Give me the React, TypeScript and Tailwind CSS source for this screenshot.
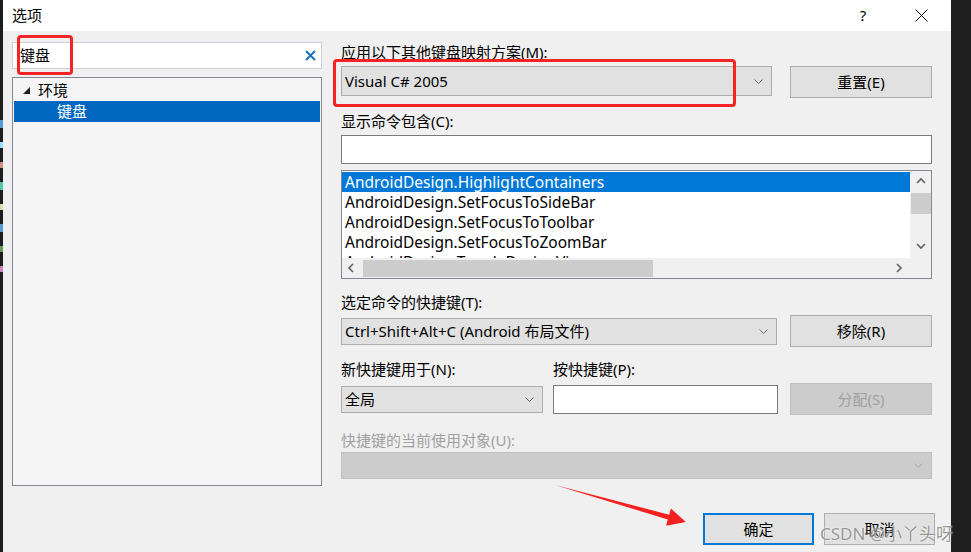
const font = "font-['Noto_Sans','Noto_Sans_CJK_SC',sans-serif]"

const Chevron = ({ color = "#606060" }: { color?: string }) => (
    <svg width="9" height="5" viewBox="0 0 9 5">
        <polyline points="0.5,0.5 4.5,4.5 8.5,0.5" fill="none" stroke={color} strokeWidth="0.9" />
    </svg>
)

const ScrollArrow = ({ dir }: { dir: "up" | "down" | "left" | "right" }) => {
    const pts = {
        up: "1,6 5,2 9,6",
        down: "1,2 5,6 9,2",
        left: "6,1 2,5 6,9",
        right: "3,1 7,5 3,9",
    }[dir]
    return (
        <svg width="10" height="10" viewBox="0 0 10 10">
            <polyline points={pts} fill="none" stroke="#606060" strokeWidth="1.6" />
        </svg>
    )
}

const Combo = ({ text, className, disabled }: { text: string; className: string; disabled?: boolean }) => (
    <div
        className={
            disabled
                ? `${className} h-[27px] flex items-center justify-between bg-[#cccccc] border border-[#bfbfbf] pl-[3px] pr-[8px]`
                : `${className} flex items-center justify-between bg-[#e1e1e1] border border-[#adadad] pl-[3px] pr-[8px]`
        }
    >
        <span className="text-[15px] leading-none text-black whitespace-nowrap">{text}</span>
        <Chevron color={disabled ? "#a0a0a0" : "#606060"} />
    </div>
)

const Button = ({ text, className, disabled }: { text: string; className: string; disabled?: boolean }) => (
    <div
        className={
            disabled
                ? `${className} flex items-center justify-center bg-[#cccccc] border border-[#bfbfbf] text-[#a0a0a0]`
                : `${className} flex items-center justify-center bg-[#e1e1e1] border border-[#adadad] text-black`
        }
    >
        <span className="text-[15px] leading-none">{text}</span>
    </div>
)

const commands = [
    "AndroidDesign.HighlightContainers",
    "AndroidDesign.SetFocusToSideBar",
    "AndroidDesign.SetFocusToToolbar",
    "AndroidDesign.SetFocusToZoomBar",
    "AndroidDesign.ToggleDesignView",
]

export default function App() {
    return (
        <div className={`${font} relative w-[971px] h-[552px] flex bg-[#1e1e1e] overflow-hidden`}>

            {/* code editor peeking out on the left */}
            <div className="w-[3px] flex flex-col gap-[14px] pt-[120px]">
                <div className="h-[8px] bg-[#569cd6]" />
                <div className="h-[6px] bg-[#9cdcfe]" />
                <div className="h-[6px] bg-[#ce9178]" />
                <div className="h-[8px] bg-[#4ec9b0]" />
                <div className="h-[6px] bg-[#dcdcaa]" />
                <div className="h-[8px] bg-[#569cd6]" />
                <div className="h-[6px] bg-[#6a9955]" />
                <div className="h-[6px] bg-[#c586c0]" />
            </div>

            <div className="w-[948px] flex flex-col">
                {/* title bar */}
                <div className="h-[31px] bg-white flex items-center pl-[9px] pr-[7px]">
                    <span className="text-[15px] leading-none text-black">选项</span>
                    <div className="ml-auto flex items-center gap-[12px]">
                        <div className="w-[46px] flex justify-center text-[15px] leading-none text-black">?</div>
                        <div className="w-[46px] flex justify-center">
                            <svg width="13" height="13" viewBox="0 0 13 13">
                                <path d="M0.5 0.5 L12.5 12.5 M12.5 0.5 L0.5 12.5" stroke="#000" strokeWidth="1" />
                            </svg>
                        </div>
                    </div>
                </div>

                {/* body */}
                <div className="flex-1 bg-[#f0f0f0] flex flex-col pt-[11px]">
                    <div className="flex h-[445px]">

                        {/* left column */}
                        <div className="ml-[9px] w-[310px] flex flex-col">
                            <div className="h-[27px] bg-white border border-[#cccedb] flex items-center pl-[7px] pr-[5px]">
                                <span className="text-[15px] leading-none text-black">键盘</span>
                                <svg className="ml-auto" width="11" height="11" viewBox="0 0 11 11">
                                    <path d="M1 1 L10 10 M10 1 L1 10" stroke="#1e6fbf" strokeWidth="2" />
                                </svg>
                            </div>
                            <div className="mt-[8px] h-[409px] bg-[#f5f5f5] border border-[#828790] pt-[2px] px-[1px]">
                                <div className="h-[21px] flex items-center text-black">
                                    <svg className="ml-[9px]" width="8" height="8" viewBox="0 0 8 8">
                                        <polygon points="7,0 7,7 0,7" fill="#1e1e1e" />
                                    </svg>
                                    <span className="ml-[7px] text-[15px] leading-none">环境</span>
                                </div>
                                <div className="h-[21px] flex items-center bg-[#0067c0] text-white">
                                    <span className="ml-[43px] text-[15px] leading-none">键盘</span>
                                </div>
                            </div>
                        </div>

                        {/* right column */}
                        <div className="ml-[19px] w-[591px] flex flex-col text-black">
                            <div className="h-[20px] flex items-center text-[15px] leading-none">应用以下其他键盘映射方案(M):</div>
                            <div className="mt-[4px] flex">
                                <Combo text="Visual C# 2005" className="w-[431px] h-[30px]" />
                                <Button text="重置(E)" className="ml-[18px] w-[142px] h-[32px]" />
                            </div>

                            <div className="mt-[13px] h-[20px] flex items-center text-[15px] leading-none">显示命令包含(C):</div>
                            <div className="mt-[4px] h-[29px] bg-white border border-[#7a7a7a]" />

                            <div className="mt-[6px] h-[109px] border border-[#828790] flex flex-col bg-[#f0f0f0]">
                                <div className="h-[87px] flex">
                                    <div className="w-[568px] bg-white overflow-hidden pt-[1px]">
                                        {commands.map((c, i) => (
                                            <div
                                                key={c}
                                                className={
                                                    i === 0
                                                        ? "h-[20px] flex items-center pl-[3px] bg-[#0078d7] text-white"
                                                        : "h-[20px] flex items-center pl-[3px] text-black"
                                                }
                                            >
                                                <span className="text-[15.5px] leading-none whitespace-nowrap translate-y-[1px]">{c}</span>
                                            </div>
                                        ))}
                                    </div>
                                    <div className="w-[21px] flex flex-col pl-[1px]">
                                        <div className="h-[22px] flex items-center justify-center"><ScrollArrow dir="up" /></div>
                                        <div className="h-[21px] bg-[#cdcdcd]" />
                                        <div className="flex-1" />
                                        <div className="h-[22px] flex items-center justify-center"><ScrollArrow dir="down" /></div>
                                    </div>
                                </div>
                                <div className="h-[20px] flex items-center">
                                    <div className="w-[20px] flex justify-center"><ScrollArrow dir="left" /></div>
                                    <div className="ml-[1px] w-[290px] h-[17px] bg-[#cdcdcd]" />
                                    <div className="flex-1" />
                                    <div className="w-[20px] flex justify-center"><ScrollArrow dir="right" /></div>
                                    <div className="w-[22px]" />
                                </div>
                            </div>

                            <div className="mt-[13px] h-[20px] flex items-center text-[15px] leading-none">选定命令的快捷键(T):</div>
                            <div className="mt-[3px] flex items-center">
                                <Combo text="Ctrl+Shift+Alt+C (Android 布局文件)" className="w-[436px] h-[27px]" />
                                <Button text="移除(R)" className="ml-[13px] w-[142px] h-[32px]" />
                            </div>

                            <div className="mt-[12px] h-[20px] flex items-center text-[15px] leading-none">
                                <span className="w-[212px]">新快捷键用于(N):</span>
                                <span>按快捷键(P):</span>
                            </div>
                            <div className="mt-[4px] flex items-center">
                                <Combo text="全局" className="w-[202px] h-[27px]" />
                                <div className="ml-[10px] w-[225px] h-[29px] bg-white border border-[#7a7a7a]" />
                                <Button text="分配(S)" disabled className="ml-[12px] w-[142px] h-[32px]" />
                            </div>

                            <div className="mt-[15px] h-[20px] flex items-center text-[15px] leading-none text-[#a0a0a0]">快捷键的当前使用对象(U):</div>
                            <Combo text="" disabled className="mt-[2px] w-[591px]" />
                        </div>
                    </div>

                    {/* footer buttons */}
                    <div className="mt-[26px] flex justify-end gap-[10px] pr-[16px]">
                        <div className="w-[111px] h-[32px] flex items-center justify-center bg-[#e1e1e1] border-2 border-[#0078d7]">
                            <span className="text-[15px] leading-none text-black">确定</span>
                        </div>
                        <Button text="取消" className="w-[111px] h-[32px]" />
                    </div>
                </div>
            </div>

            <div className="w-[20px]" />

            {/* annotations */}
            <div className="absolute left-[17px] top-[35px] w-[56px] h-[40px] border-[3px] border-[#f52424] rounded-[4px] pointer-events-none" />
            <div className="absolute left-[333px] top-[59px] w-[403px] h-[48px] border-[3px] border-[#f52424] rounded-[4px] pointer-events-none" />
            <svg className="absolute left-0 top-0 pointer-events-none" width="971" height="552" viewBox="0 0 971 552">
                <polygon
                    points="555,485 669.2,514.7 670.9,508.4 685.8,522 666.1,525.8 667.8,519.5"
                    fill="#f52020"
                />
            </svg>
            <div className="absolute left-[820px] top-[522px] text-[17px] leading-[24px] text-[#8c8c8c]/90 whitespace-nowrap pointer-events-none [text-shadow:0_0_2px_#ffffff]">
                CSDN @小丫头呀
            </div>
        </div>
    )
}
